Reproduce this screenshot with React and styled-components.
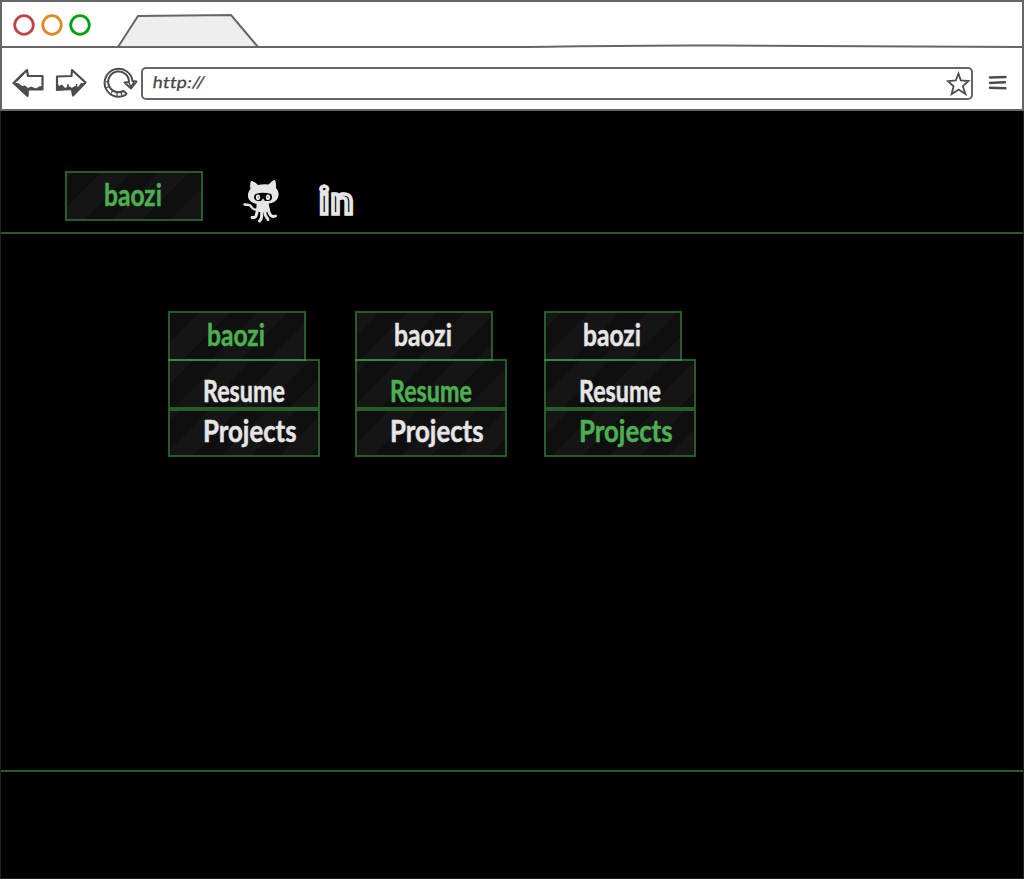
import React from "react";
import styled, { createGlobalStyle } from "styled-components";

const Global = createGlobalStyle`
  * { box-sizing: border-box; }
  body { margin: 0; background: #000; }
`;

const Browser = styled.div`
  width: 1024px;
  height: 879px;
  display: flex;
  flex-direction: column;
  overflow: hidden;
  background: #000;
  font-family: Lato, "Open Sans", sans-serif;
`;

const Chrome = styled.header`
  height: 111px;
  flex: none;
  display: flex;
  flex-direction: column;
  background: #fff;
  border: 2px solid #666;
`;

const TabStrip = styled.div`
  height: 46px;
  flex: none;
  display: flex;

  svg { display: block; }
`;

const AddressRow = styled.div`
  height: 61px;
  display: flex;
  align-items: flex-start;
  padding: 19px 0 0 10px;
`;

const Drawing = styled.svg`
  display: block;
  flex: none;
  overflow: visible;
`;

const AddressField = styled.div`
  width: 832px;
  flex: none;
  height: 33px;
  margin-left: 1px;
  display: flex;
  align-items: center;
  justify-content: space-between;
  padding: 0 1px 0 10px;
  border: 2px solid #666;
  border-radius: 5px;
`;

const Url = styled.span`
  width: 52px;
  color: #444;
  font-size: 16px;
  line-height: 20px;
  letter-spacing: 0.3px;
  white-space: nowrap;
  -webkit-text-stroke: 0.3px #444;
  transform: translateY(-2px) scaleX(${(p) => p.$stretch}) skewX(-8deg);
  transform-origin: 0 50%;
`;

const Page = styled.div`
  flex: 1;
  display: flex;
  flex-direction: column;
  border: solid #222;
  border-width: 0 1px 1px 1px;
`;

const TopBar = styled.nav`
  height: 123px;
  flex: none;
  display: flex;
  align-items: flex-start;
  padding: 60px 0 0 64px;
  border-bottom: 2px solid #265c29;
`;

const Content = styled.main`
  height: 538px;
  flex: none;
  display: flex;
  align-items: flex-start;
  padding: 77px 0 0 167px;
  border-bottom: 2px solid #265c29;
`;

const Menu = styled.div`
  width: 152px;
  margin-right: ${(p) => p.$gap}px;
  display: flex;
  flex-direction: column;
  align-items: flex-start;
`;

const Tile = styled.div`
  width: ${(p) => p.$width}px;
  height: ${(p) => p.$height}px;
  flex: none;
  margin-top: ${(p) => p.$shift || 0}px;
  padding: ${(p) => p.$top}px 0 0 ${(p) => p.$left}px;
  border: 2px solid rgba(76, 175, 80, 0.53);
  background: repeating-linear-gradient(
    135deg,
    #151515 0,
    #151515 ${(p) => p.$phase}px,
    #0f0f0f ${(p) => p.$phase}px,
    #0f0f0f ${(p) => p.$phase + 20}px,
    #151515 ${(p) => p.$phase + 20}px,
    #151515 41px
  );
  background-clip: padding-box;
`;

const Label = styled.span`
  display: block;
  width: max-content;
  color: ${(p) => (p.$active ? "#4caf50" : "#e6e6e6")};
  font-size: 30px;
  font-weight: 700;
  line-height: 36px;
  -webkit-text-stroke: 0.5px currentColor;
  transform: scaleX(${(p) => p.$stretch});
  transform-origin: 0 50%;
`;

const GithubMark = styled(Drawing)`
  margin: 8px 0 0 41px;
`;

const InMark = styled.span`
  margin: 5px 0 0 37px;
  color: #000;
  font-size: 38px;
  font-weight: 700;
  line-height: 46px;
  letter-spacing: 1px;
  -webkit-text-stroke: 3.4px #e6e6e6;
  transform: scaleX(1.07);
  transform-origin: 0 50%;
`;

const words = {
  baozi: { text: "baozi", width: 138, height: 50, top: 3, left: 37, stretch: 0.82 },
  resume: { text: "Resume", width: 152, height: 50, shift: -2, top: 11, left: 33, stretch: 0.775 },
  projects: { text: "Projects", width: 152, height: 48, top: 1, left: 33, stretch: 0.86 },
};

function Item({ name, active, phase }) {
  const w = words[name];
  return (
    <Tile $width={w.width} $height={w.height} $top={w.top} $left={w.left} $shift={w.shift} $phase={phase}>
      <Label $active={active} $stretch={w.stretch}>{w.text}</Label>
    </Tile>
  );
}

const menus = [
  { active: "baozi", gap: 35, phases: [1, 16, 7] },
  { active: "resume", gap: 37, phases: [15, 9, 2] },
  { active: "projects", gap: 0, phases: [10, 4, 16] },
];

export default function App() {
  return (
    <Browser>
      <Global />
      <Chrome>
        <TabStrip>
          <svg width="1020" height="46" viewBox="2 2 1020 46" fill="none">
            <g strokeWidth="2.8">
              <circle cx="24" cy="25" r="9.3" stroke="#bb4444" />
              <circle cx="52" cy="25" r="9.3" stroke="#dc8a20" />
              <circle cx="80" cy="25" r="9.3" stroke="#00a00c" />
            </g>
            <path d="M118 47 L138 16 L231 15 L258 47" fill="#eee" stroke="#666" strokeWidth="2" />
            <path d="M2 47 H520 C600 46 650 45 720 45.5 C820 46 910 47 1022 47" stroke="#666" strokeWidth="2" />
          </svg>
        </TabStrip>
        <AddressRow>
          <Drawing width="128" height="32" viewBox="12 67 128 32" fill="none" stroke="#4b4d4c" strokeWidth="2.2" strokeLinejoin="round">
            <path d="M13.5 83 L27 70 L28 76 L42.5 76 L42.5 89.5 L28 89.5 L27.5 96 Z" />
            <path d="M14 83 L18 83 L22 86 L25 85.5 L28 88 L31 86.5 L36 88.5 L39 86.5 L42 86 V90 H28 L27 96 Z" fill="#4b4d4c" stroke="none" />
            <path d="M16 81 L23 74 M19 85 L26 92 M24 86 V93" />
            <path d="M57 76.5 L71.5 76 L72 70 L85.5 82.5 L73 95.5 L72 89 L57 90 Z" />
            <path d="M57 82 L59 86 L62 84.5 L65 88 L69 86 L72 88 L75 86 L78 87 L81 83 L85 83 L73 95 L71 89 L57 90 Z" fill="#4b4d4c" stroke="none" />
            <path d="M73.5 87 V93 M76.5 84 V90 M68 84 V88" strokeWidth="1.6" />
            <path d="M127 94 A14 14 0 1 1 132.5 81 L136.5 81.5 L131 88.5 L124.5 82.5 L129 82 A10.4 10.4 0 1 0 123.5 91 L127 94" strokeWidth="2" />
            <path d="M105.5 82 L109 81 M106 88 L110 86 M111 93.5 L113 90 M117 96 V92 M122 96 L121 92" strokeWidth="1.3" />
            <path d="M129 83 L131 87 L134 82" strokeWidth="1.5" />
          </Drawing>
          <AddressField>
            <Url $stretch={1.13}>http://</Url>
            <Drawing width="24" height="26" viewBox="0 0 24 26" fill="none" stroke="#4b4d4c" strokeWidth="1.8" strokeLinejoin="miter">
              <path d="M12.5 2.5 L14.8 9.5 L22.5 10 L16.8 15.2 L19.5 23 L12.7 18.6 L5.6 23 L7.6 15.3 L2 10.2 L9.8 9.5 Z" />
            </Drawing>
          </AddressField>
          <Drawing width="50" height="32" viewBox="973 67 50 32" fill="none" stroke="#4b4d4c" strokeWidth="2.4" strokeLinecap="round">
            <path d="M990 77.5 L1005.5 77 M990 83 L998 82.5 L1005 82.3 M990 87.8 L1005.5 88.2" />
          </Drawing>
        </AddressRow>
      </Chrome>
      <Page>
        <TopBar>
          <Item name="baozi" active phase={4} />
          <GithubMark width="38" height="44" viewBox="0 0 38 44">
            <g fill="#e6e6e6">
              <path d="M7 2 C9 1.5 12 4 14 6 Q19 5 24.5 5.5 C27 3 29.5 1 31 1 C32.3 4 32 7 32 9 C36 13 35 19 31.5 22 C29 24 26 24.5 23 25 H14 C10 24.5 7 23.5 5 20.5 C3 17 4 12.5 6.5 10 Q5.5 5 7 2 Z" />
              <path d="M12.5 23 H24.5 L25.5 31 L23 33 H15 L12.5 31 Z" />
            </g>
            <g fill="none" stroke="#e6e6e6" strokeLinecap="round" strokeWidth="3">
              <path d="M14 30 C8 33 8 26 5 26 L0.5 25.5" strokeWidth="2.4" />
              <path d="M14 29 C12 34 14 39 8 38.5" />
              <path d="M18 30 C17 38 19 39 15.5 42" />
              <path d="M21 30 C20 38 24 39 24 40.5" />
              <path d="M24 29 C25 35 27 39 31.5 37" />
            </g>
            <path d="M11.5 15 Q19 12.5 27 15 C29 18 28 22 24 22 H14.5 C10.5 22 8.5 18 11.5 15 Z" fill="#050505" />
            <ellipse cx="14" cy="18.2" rx="2.1" ry="2.8" fill="#eee" />
            <ellipse cx="24" cy="18.2" rx="2.1" ry="2.8" fill="#eee" />
            <path d="M14.3 17.2 V19 M23.8 17.2 V19" stroke="#777" strokeWidth="1" />
            <path d="M16.5 22.5 L19 19.5 L21.5 22.5" fill="#ddd" />
          </GithubMark>
          <InMark>in</InMark>
        </TopBar>
        <Content>
          {menus.map((m) => (
            <Menu key={m.active} $gap={m.gap}>
              {Object.keys(words).map((name, i) => (
                <Item key={name} name={name} active={m.active === name} phase={m.phases[i]} />
              ))}
            </Menu>
          ))}
        </Content>
      </Page>
    </Browser>
  );
}
